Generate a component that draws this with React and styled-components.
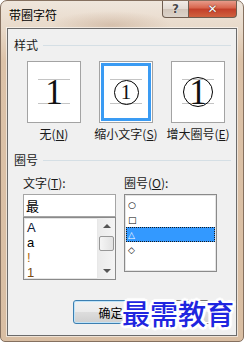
import React from "react";
import styled, { createGlobalStyle } from "styled-components";

const GlobalStyle = createGlobalStyle`
  html, body { margin: 0; padding: 0; background: #ffffff; }
  body {
    font-family: "Noto Sans CJK SC", "Liberation Sans", sans-serif;
    font-size: 12px;
    color: #1a1a1a;
  }
`;

const Window = styled.div`
  position: relative;
  width: 244px;
  height: 342px;
  box-sizing: border-box;
  display: flex;
  flex-direction: column;
  padding: 0 6px 5px 6px;
  border: 1px solid #85705f;
  border-radius: 7px 7px 5px 5px;
  overflow: hidden;
  background:
    radial-gradient(ellipse 60px 14px at 110px 24px, rgba(170, 130, 100, 0.3), transparent),
    linear-gradient(to bottom, #efe6dc 0px, #e8d9c9 28px, #dcc2a8 60px, #d9bea3 100%);
`;

const TitleBar = styled.div`
  height: 27px;
  display: flex;
  align-items: center;
`;

const Title = styled.div`
  padding-left: 2px;
  line-height: 16px;
  color: #000;
  flex: 1;
`;

const Captions = styled.div`
  align-self: flex-start;
  margin-top: -1px;
  display: flex;
`;

const CaptionButton = styled.div`
  width: ${(p) => p.w}px;
  height: 18px;
  box-sizing: border-box;
  display: flex;
  align-items: center;
  justify-content: center;
  border: 1px solid #6f5d50;
  border-top: none;
  font-family: "DejaVu Sans", sans-serif;
  font-weight: bold;
  font-size: 12px;
  color: ${(p) => (p.close ? "#ffffff" : "#4a4a4a")};
  text-shadow: ${(p) =>
    p.close
      ? "0 0 1px #5a1a10, 0 0 1px #5a1a10"
      : "0 0 1px #fff, 0 0 1px #fff"};
  background: ${(p) =>
    p.close
      ? "linear-gradient(to bottom, #e9a292 0%, #d9674f 45%, #c3402a 55%, #d0613f 100%)"
      : "linear-gradient(to bottom, #f3eee9 0%, #e3dbd3 50%, #d2c6bb 55%, #dcd3ca 100%)"};
  border-radius: ${(p) => (p.close ? "0 0 4px 0" : "0 0 0 4px")};
  border-left: ${(p) => (p.close ? "none" : "1px solid #6f5d50")};
`;

const Client = styled.div`
  flex: 1;
  display: flex;
  flex-direction: column;
  border: 1px solid #6b6b6b;
  box-shadow: 0 0 0 1px rgba(255, 255, 255, 0.55);
  background: #f0f0f0;
  padding-top: 8px;
`;

const SectionHead = styled.div`
  display: flex;
  align-items: center;
  gap: 5px;
  padding: 0 5px 0 6px;
  height: 16px;
  line-height: 16px;
  margin-top: ${(p) => p.top || 0}px;

  &::after {
    content: "";
    flex: 1;
    height: 1px;
    background: #d5dfe5;
  }
`;

const Options = styled.div`
  display: flex;
  gap: 18px;
  padding-left: 19px;
  margin-top: 8px;
`;

const Option = styled.div`
  width: 54px;
  display: flex;
  flex-direction: column;
  align-items: center;
`;

const Preview = styled.div`
  position: relative;
  width: 54px;
  height: 62px;
  box-sizing: border-box;
  background: #ffffff;
  border: 1px solid #a3a3a3;
  display: flex;
  align-items: center;
  justify-content: center;
  box-shadow: ${(p) =>
    p.selected ? "inset 0 0 0 1px #fff, inset 0 0 0 4px #3a9bf3" : "none"};

  &::before,
  &::after {
    content: "";
    position: absolute;
    left: 10px;
    right: 10px;
    height: 1px;
    background: #c4c4c4;
  }
  &::before { top: 17px; }
  &::after { top: 41px; }
`;

const Digit = styled.span`
  position: relative;
  z-index: 1;
  font-family: "Liberation Serif", serif;
  font-size: ${(p) => p.size}px;
  line-height: 1;
  color: #111;
`;

const Ring = styled.span`
  position: relative;
  z-index: 1;
  width: ${(p) => p.d}px;
  height: ${(p) => p.d}px;
  box-sizing: border-box;
  border: 1px solid #000;
  border-radius: 50%;
  display: flex;
  align-items: center;
  justify-content: center;
`;

const OptionLabel = styled.div`
  margin-top: 3px;
  line-height: 16px;
  white-space: nowrap;
  color: #1a1a1a;
`;

const Key = styled.span`
  text-decoration: underline;
`;

const Fields = styled.div`
  display: flex;
  gap: 8px;
  padding-left: 15px;
  margin-top: 7px;
`;

const Field = styled.div`
  width: 93px;
  display: flex;
  flex-direction: column;
`;

const FieldLabel = styled.div`
  line-height: 16px;
  margin-bottom: 3px;
  white-space: nowrap;
`;

const TextInput = styled.div`
  height: 23px;
  box-sizing: border-box;
  border: 1px solid #a5a5a5;
  background: #fff;
  padding-left: 2px;
  font-size: 13px;
  line-height: 21px;
  color: #000;
`;

const ListBox = styled.div`
  height: ${(p) => p.h}px;
  box-sizing: border-box;
  border: 1px solid #8a8a8a;
  box-shadow: inset 0 0 0 1px #e4e4e4;
  background: #fff;
  display: flex;
`;

const Items = styled.div`
  flex: 1;
  display: flex;
  flex-direction: column;
  padding: 2px 1px 0 1px;
`;

const Item = styled.div`
  height: 15px;
  box-sizing: border-box;
  display: flex;
  align-items: center;
  padding-left: ${(p) => (p.small ? 1 : 1)}px;
  font-family: ${(p) =>
    p.small ? '"DejaVu Sans", sans-serif' : '"Liberation Sans", sans-serif'};
  font-size: ${(p) => (p.small ? 9 : 13)}px;
  font-weight: ${(p) => (p.small ? "bold" : "normal")};
  color: ${(p) => (p.selected ? "#fff" : p.tone || "#000")};
  background: ${(p) => (p.selected ? "#3399ff" : "transparent")};
  border: 1px ${(p) => (p.selected ? "dotted #1a1a1a" : "solid transparent")};
`;

const ScrollBar = styled.div`
  width: 17px;
  display: flex;
  flex-direction: column;
  align-items: center;
  background: linear-gradient(to right, #ebebeb, #f4f4f4);
  border-left: 1px solid #e8e8e8;
`;

const Arrow = styled.div`
  width: 0;
  height: 0;
  margin: 6px 0;
  border-left: 4px solid transparent;
  border-right: 4px solid transparent;
  border-${(p) => (p.down ? "top" : "bottom")}: 4px solid #555;
`;

const Thumb = styled.div`
  width: 15px;
  height: 15px;
  box-sizing: border-box;
  margin-top: 2px;
  border: 1px solid #979797;
  border-radius: 2px;
  background: linear-gradient(to right, #f5f5f5, #e2e2e2);
`;

const Track = styled.div`
  flex: 1;
`;

const ButtonRow = styled.div`
  margin-top: auto;
  display: flex;
  justify-content: flex-end;
  gap: 6px;
  padding: 0 7px 11px 0;
`;

const Button = styled.div`
  width: 75px;
  height: 24px;
  box-sizing: border-box;
  display: flex;
  align-items: center;
  justify-content: center;
  border: 1px solid ${(p) => (p.primary ? "#3c7fb1" : "#707070")};
  border-radius: 3px;
  box-shadow: inset 0 0 0 1px ${(p) => (p.primary ? "#bfe3f8" : "#fcfcfc")};
  background: linear-gradient(to bottom, #f2f2f2 0%, #ebebeb 50%, #dddddd 51%, #cfcfcf 100%);
  font-size: 12px;
  color: #000;
`;

const Watermark = styled.div`
  position: absolute;
  left: 121px;
  top: 296px;
  font-family: "Noto Sans CJK SC", sans-serif;
  font-weight: 500;
  font-size: 28px;
  line-height: 32px;
  letter-spacing: 0px;
  color: #1f25e0;
  white-space: nowrap;
  text-shadow:
    2px 0 0 #fff, -2px 0 0 #fff, 0 2px 0 #fff, 0 -2px 0 #fff,
    2px 2px 0 #fff, -2px -2px 0 #fff, 2px -2px 0 #fff, -2px 2px 0 #fff,
    3px 0 1px #fff, -3px 0 1px #fff, 0 3px 1px #fff, 0 -3px 1px #fff;
`;

const textItems = [
  { t: "A", tone: "#10203a" },
  { t: "a", tone: "#000" },
  { t: "!", tone: "#b06a10" },
  { t: "1", tone: "#7a4a12" },
];

const ringItems = ["○", "□", "△", "◇"];

export default function App() {
  return (
    <>
      <GlobalStyle />
      <Window>
        <TitleBar>
          <Title>带圈字符</Title>
          <Captions>
            <CaptionButton w={27}>?</CaptionButton>
            <CaptionButton w={48} close>✕</CaptionButton>
          </Captions>
        </TitleBar>
        <Client>
          <SectionHead>样式</SectionHead>
          <Options>
            <Option>
              <Preview>
                <Digit size={35}>1</Digit>
              </Preview>
              <OptionLabel>无(<Key>N</Key>)</OptionLabel>
            </Option>
            <Option>
              <Preview selected>
                <Ring d={25}>
                  <Digit size={21}>1</Digit>
                </Ring>
              </Preview>
              <OptionLabel>缩小文字(<Key>S</Key>)</OptionLabel>
            </Option>
            <Option>
              <Preview>
                <Ring d={30}>
                  <Digit size={35}>1</Digit>
                </Ring>
              </Preview>
              <OptionLabel>增大圈号(<Key>E</Key>)</OptionLabel>
            </Option>
          </Options>

          <SectionHead top={10}>圈号</SectionHead>
          <Fields>
            <Field>
              <FieldLabel>文字(<Key>T</Key>):</FieldLabel>
              <TextInput>最</TextInput>
              <ListBox h={63}>
                <Items>
                  {textItems.map((it) => (
                    <Item key={it.t} tone={it.tone}>{it.t}</Item>
                  ))}
                </Items>
                <ScrollBar>
                  <Arrow />
                  <Thumb />
                  <Track />
                  <Arrow down />
                </ScrollBar>
              </ListBox>
            </Field>
            <Field>
              <FieldLabel>圈号(<Key>O</Key>):</FieldLabel>
              <ListBox h={78}>
                <Items>
                  {ringItems.map((g, i) => (
                    <Item key={g} small selected={i === 2}>{g}</Item>
                  ))}
                </Items>
              </ListBox>
            </Field>
          </Fields>

          <ButtonRow>
            <Button primary>确定</Button>
            <Button />
          </ButtonRow>
        </Client>
        <Watermark>最需教育</Watermark>
      </Window>
    </>
  );
}
